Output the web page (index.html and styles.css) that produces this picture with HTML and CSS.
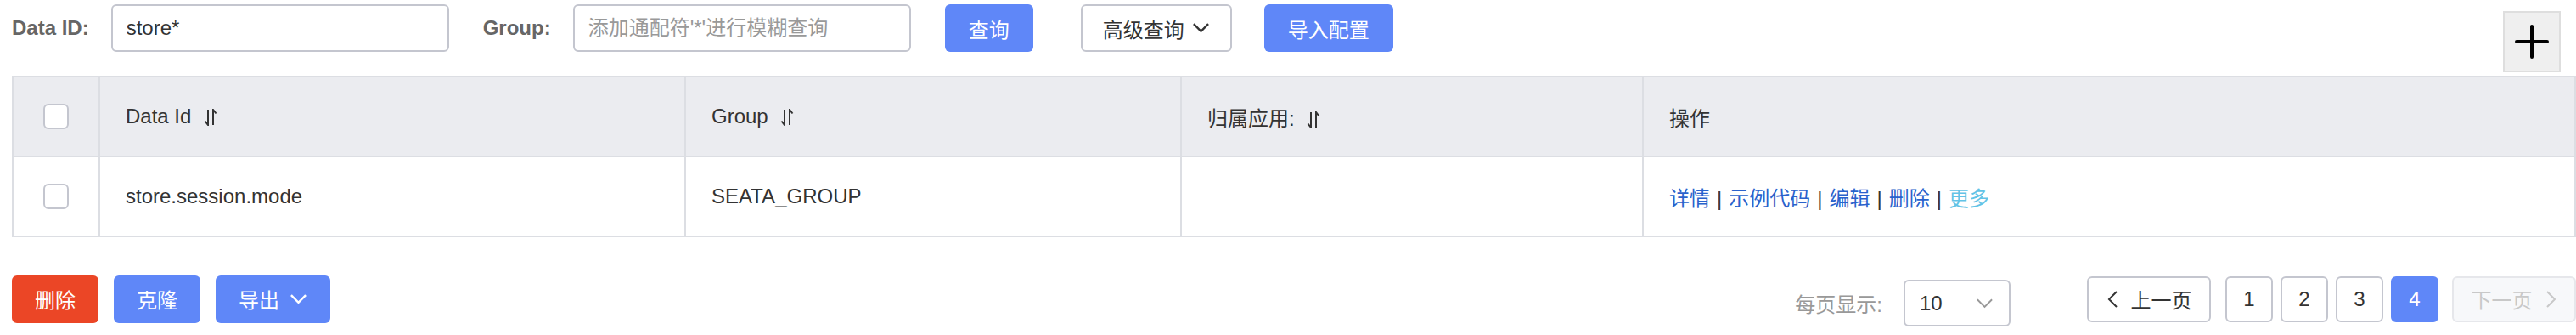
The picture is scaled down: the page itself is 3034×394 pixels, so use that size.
FILE: index.html
```html
<!DOCTYPE html>
<html lang="zh-CN">
<head>
    <meta charset="UTF-8">
    <title>配置列表</title>
    <link rel="stylesheet" href="styles.css">
</head>
<body>
    <div class="page">
        <div class="toolbar">
            <div class="search-form">
                <label class="field-label" for="data-id">Data ID:</label>
                <input id="data-id" class="text-input" type="text" value="store*">
                <label class="field-label" for="group">Group:</label>
                <input id="group" class="text-input" type="text" placeholder="添加通配符'*'进行模糊查询">
                <button class="btn btn-primary btn-query">查询</button>
                <button class="btn btn-normal btn-advanced">高级查询
                    <svg class="chevron" viewBox="0 0 22 14"><polyline points="2,2 11,11 20,2"/></svg>
                </button>
                <button class="btn btn-primary btn-import">导入配置</button>
            </div>
            <button class="add-btn" title="新建配置">
                <svg viewBox="0 0 40 40"><path d="M20 2 V38 M2 20 H38"/></svg>
            </button>
        </div>

        <table class="config-table">
            <thead>
                <tr>
                    <th class="col-check"><span class="checkbox"></span></th>
                    <th class="col-id">Data Id <svg class="sort" viewBox="0 0 16 20"><path d="M5 1 V19 L1.5 14.5 M11 19 V1 L14.5 5.5"/></svg></th>
                    <th class="col-group">Group <svg class="sort" viewBox="0 0 16 20"><path d="M5 1 V19 L1.5 14.5 M11 19 V1 L14.5 5.5"/></svg></th>
                    <th class="col-app">归属应用: <svg class="sort" viewBox="0 0 16 20"><path d="M5 1 V19 L1.5 14.5 M11 19 V1 L14.5 5.5"/></svg></th>
                    <th class="col-ops">操作</th>
                </tr>
            </thead>
            <tbody>
                <tr>
                    <td class="col-check"><span class="checkbox"></span></td>
                    <td>store.session.mode</td>
                    <td>SEATA_GROUP</td>
                    <td></td>
                    <td class="ops">
                        <a href="#">详情</a><span class="sep">|</span><a href="#">示例代码</a><span class="sep">|</span><a href="#">编辑</a><span class="sep">|</span><a href="#">删除</a><span class="sep">|</span><a href="#" class="more">更多</a>
                    </td>
                </tr>
            </tbody>
        </table>

        <div class="footer">
            <div class="batch-actions">
                <button class="btn btn-danger">删除</button>
                <button class="btn btn-primary">克隆</button>
                <button class="btn btn-primary btn-export">导出
                    <svg class="chevron" viewBox="0 0 22 14"><polyline points="2,2 11,11 20,2"/></svg>
                </button>
            </div>
            <div class="pager">
                <span class="page-size-label">每页显示:</span>
                <div class="page-size">
                    <span>10</span>
                    <svg class="chevron" viewBox="0 0 22 14"><polyline points="2,2 11,11 20,2"/></svg>
                </div>
                <button class="page-btn page-prev">
                    <svg class="arrow" viewBox="0 0 14 22"><polyline points="12,2 3,11 12,20"/></svg>
                    上一页
                </button>
                <div class="page-list">
                    <button class="page-btn page-num">1</button>
                    <button class="page-btn page-num">2</button>
                    <button class="page-btn page-num">3</button>
                    <button class="page-btn page-num current">4</button>
                </div>
                <button class="page-btn page-next" disabled>
                    下一页
                    <svg class="arrow" viewBox="0 0 14 22"><polyline points="2,2 11,11 2,20"/></svg>
                </button>
            </div>
        </div>
    </div>
</body>
</html>
```

FILE: styles.css
```css
body {
    margin: 0;
    background: #fff;
    color: #333;
    font-family: "Liberation Sans", "Noto Sans CJK SC", sans-serif;
    font-size: 24px;
}
.page {
    padding-left: 14px;
}

/* top search bar */
.toolbar {
    display: flex;
    justify-content: space-between;
    align-items: flex-start;
}
.search-form {
    display: flex;
    align-items: center;
    margin-top: 5px;
}
.field-label {
    font-weight: bold;
    color: #666;
    margin-right: 26px;
}
.text-input {
    box-sizing: border-box;
    width: 398px;
    height: 56px;
    padding: 0 16px;
    border: 2px solid #c4c6cf;
    border-radius: 6px;
    font: inherit;
    color: #333;
    margin-right: 40px;
    outline: none;
}
.text-input::placeholder {
    color: #999;
}
.btn {
    box-sizing: border-box;
    height: 56px;
    padding: 0 26px;
    border: 2px solid transparent;
    border-radius: 6px;
    font: inherit;
    display: inline-flex;
    align-items: center;
    gap: 12px;
    cursor: pointer;
}
.btn-primary {
    background: #5f87f8;
    color: #fff;
}
.btn-danger {
    background: #eb4626;
    color: #fff;
}
.btn-normal {
    background: #fff;
    border-color: #c4c6cf;
    color: #333;
}
.btn-query {
    margin-right: 56px;
}
.btn-advanced {
    gap: 9px;
    padding: 0 24px;
    margin-right: 38px;
}
.chevron {
    width: 21px;
    height: 14px;
    fill: none;
    stroke: currentColor;
    stroke-width: 2.6;
}
.add-btn {
    box-sizing: border-box;
    width: 68px;
    height: 72px;
    margin: 13px 18px 0 0;
    padding: 0;
    background: #efefef;
    border: 2px solid #dedede;
    display: flex;
    align-items: center;
    justify-content: center;
}
.add-btn svg {
    width: 40px;
    height: 40px;
    fill: none;
    stroke: #000;
    stroke-width: 4;
    stroke-linecap: round;
}

/* table */
.config-table {
    width: 100%;
    margin-top: 4px;
    border-collapse: collapse;
    table-layout: fixed;
}
.config-table th,
.config-table td {
    height: 92px;
    padding: 0 30px;
    border: 2px solid #dcdee3;
    text-align: left;
    font-weight: normal;
    color: #333;
}
.config-table th {
    background: #ebecf0;
}
.config-table .col-check {
    width: 100px;
    padding: 0;
    text-align: center;
}
.col-id { width: 628px; }
.col-group { width: 522px; }
.col-app { width: 482px; }
.checkbox {
    display: inline-block;
    box-sizing: border-box;
    width: 30px;
    height: 30px;
    border: 2px solid #c4c6cf;
    border-radius: 6px;
    background: #fff;
    vertical-align: middle;
}
.sort {
    width: 16px;
    height: 20px;
    margin-left: 8px;
    vertical-align: -3px;
    fill: none;
    stroke: #333;
    stroke-width: 2;
}
.ops a {
    color: #2962cc;
    text-decoration: none;
}
.ops a.more {
    color: #62c3e6;
}
.ops .sep {
    margin: 0 8px;
    color: #333;
}

/* footer: batch buttons and pagination */
.footer {
    display: flex;
    justify-content: space-between;
    align-items: center;
    margin-top: 40px;
}
.batch-actions {
    display: flex;
    gap: 18px;
}
.batch-actions .btn {
    padding: 0 25px;
}
.pager {
    display: flex;
    align-items: center;
}
.page-size-label {
    color: #999;
    margin: 10px 25px 0 0;
}
.page-size {
    box-sizing: border-box;
    width: 126px;
    height: 55px;
    margin: 10px 90px 0 0;
    padding: 0 18px 0 17px;
    border: 2px solid #c4c6cf;
    border-radius: 6px;
    display: flex;
    align-items: center;
    justify-content: space-between;
}
.page-size .chevron {
    color: #999;
    stroke-width: 2;
}
.page-btn {
    box-sizing: border-box;
    height: 54px;
    border: 2px solid #c4c6cf;
    border-radius: 6px;
    background: #fff;
    color: #333;
    font: inherit;
    display: inline-flex;
    align-items: center;
    justify-content: center;
    gap: 15px;
    padding: 0;
}
.page-prev {
    width: 146px;
    margin-right: 17px;
}
.page-list {
    display: flex;
    gap: 9px;
    margin-right: 16px;
}
.page-num {
    width: 56px;
}
.page-num.current {
    background: #5f87f8;
    border-color: #5f87f8;
    color: #fff;
}
.page-next {
    width: 146px;
    background: #f7f8fa;
    border-color: #e6e7eb;
    color: #c8c8c8;
}
.arrow {
    width: 14px;
    height: 22px;
    fill: none;
    stroke: currentColor;
    stroke-width: 2;
}
```
